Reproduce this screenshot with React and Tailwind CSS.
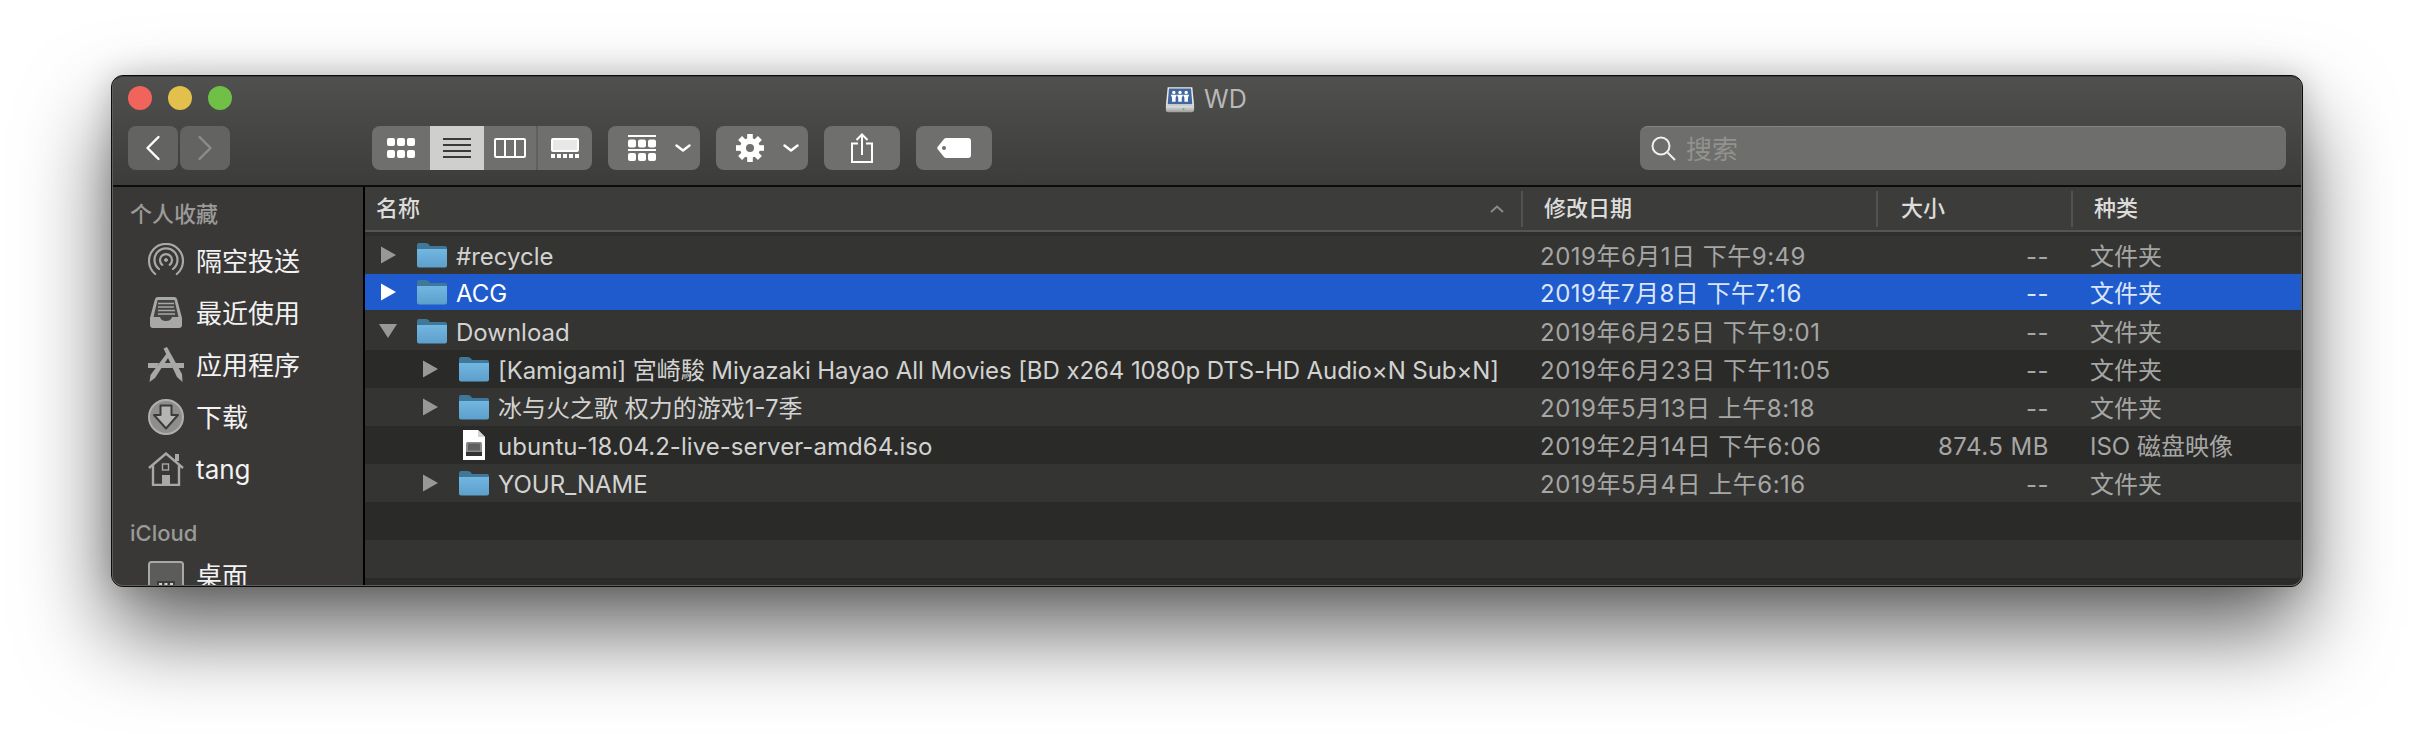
import React from "react";

const Chevron = ({ className = "" }) => (
  <svg width="16" height="8" viewBox="0 0 16 8" className={className}>
    <path d="M1.5 1.5 L8 6.5 L14.5 1.5" fill="none" stroke="#fff" strokeWidth="2.4" strokeLinecap="round" strokeLinejoin="round" />
  </svg>
);

const Folder = () => (
  <svg width="30" height="26" viewBox="0 0 30 26" className="shrink-0">
    <defs>
      <linearGradient id="fbody" x1="0" y1="0" x2="0" y2="1">
        <stop offset="0" stopColor="#72b6e2" />
        <stop offset="1" stopColor="#5d9fcb" />
      </linearGradient>
    </defs>
    <path d="M0 3 Q0 1 2 1 H9 Q11 1 12 2.5 L13 4 H28 Q30 4 30 6 V10 H0 Z" fill="#3f7898" />
    <path d="M0 7 H30 V23.5 Q30 25.5 28 25.5 H2 Q0 25.5 0 23.5 Z" fill="url(#fbody)" />
  </svg>
);

const FileIcon = () => (
  <svg width="30" height="30" viewBox="0 0 30 30" className="shrink-0">
    <path d="M4 0 H19 L26 7 V30 H4 Z" fill="#fff" />
    <path d="M19 0 L26 7 H19 Z" fill="#d4d4d4" />
    <rect x="7" y="12" width="16" height="14" rx="1.5" fill="#8a8a8a" />
    <rect x="9" y="13.5" width="12" height="7" rx="1" fill="#5f5f5f" />
    <rect x="7" y="22" width="16" height="4" fill="#333" />
  </svg>
);

const Tri = ({ open, color }) => (
  <svg width="22" height="18" viewBox="0 0 22 18" className="shrink-0">
    {open ? <polygon points="1,2 19,2 10,16" fill={color} /> : <polygon points="3,0.5 18,9 3,17.5" fill={color} />}
  </svg>
);

const Airdrop = () => (
  <svg width="36" height="36" viewBox="0 0 36 36" fill="none" stroke="#a8a8a6" strokeWidth="2.2" strokeLinecap="round">
    <path d="M7.2 31 A17 17 0 1 1 28.8 31" />
    <path d="M11 26 A11.5 11.5 0 1 1 25 26" />
    <path d="M14.3 21.8 A6 6 0 1 1 21.7 21.8" />
    <circle cx="18" cy="17" r="1.5" fill="#a8a8a6" strokeWidth="1" />
  </svg>
);
const Recents = () => (
  <svg width="36" height="32" viewBox="0 0 36 32">
    <path d="M7 2 Q7.5 0 10 0 H26 Q28.5 0 29 2 L34 21 V28 Q34 31 31 31 H5 Q2 31 2 28 V21 Z" fill="#a8a8a6" />
    <path d="M9.5 3 H26.5 L30.5 20 H24 Q23 24 18 24 Q13 24 12 20 H5.5 Z" fill="#454543" />
    <path d="M10 6.5 H26 M10 10 H26 M10 13.5 H27 M10 17 H27" stroke="#a8a8a6" strokeWidth="1.6" />
  </svg>
);
const Apps = () => (
  <svg width="36" height="36" viewBox="0 0 36 36" fill="#a8a8a6" stroke="none">
    <path d="M0 16 H11 L8.5 21 H0 Z M25 16 H36 V21 H27.5 Z M13 16 H23 L25 21 H11 Z" />
    <path d="M19 6 L22 8 L7 31 L1.5 35 L2.5 28 Z" />
    <path d="M15.5 1.5 L19 0 L34 27 L34.5 35 L29 30 Z" />
  </svg>
);
const Download = () => (
  <svg width="36" height="36" viewBox="0 0 36 36">
    <circle cx="18" cy="18" r="17" fill="#8e8e8c" stroke="#b0b0ae" strokeWidth="2" />
    <path d="M12.5 6.5 H23.5 V16 H30 L18 29.5 L6 16 H12.5 Z" fill="#b4b4b2" stroke="#3c3b3a" strokeWidth="2" strokeLinejoin="round" />
  </svg>
);
const Home = () => (
  <svg width="36" height="34" viewBox="0 0 36 34" fill="none" stroke="#a8a8a6" strokeWidth="2.4">
    <path d="M1 16 L18 1.5 L35 16" />
    <path d="M5 13.5 V33 H31 V13.5" />
    <rect x="27" y="2" width="4" height="7" fill="#a8a8a6" stroke="none" />
    <rect x="14.5" y="12" width="6" height="6" strokeWidth="1.4" />
    <rect x="14" y="23" width="8" height="10" fill="#a8a8a6" stroke="none" />
  </svg>
);
const Desktop = () => (
  <svg width="36" height="30" viewBox="0 0 36 30">
    <rect x="1" y="1" width="34" height="28" rx="2.5" fill="#5c5c5a" stroke="#a8a8a6" strokeWidth="2" />
    <rect x="9" y="20" width="18" height="10" fill="#3c3b3a" />
    <rect x="11" y="22" width="3" height="4" fill="#d0d0d0" />
    <rect x="16.5" y="22" width="3" height="4" fill="#d0d0d0" />
    <rect x="22" y="22" width="3" height="4" fill="#d0d0d0" />
  </svg>
);

const Gear = () => (
  <svg width="28" height="28" viewBox="0 0 28 28" fill="#fff">
    <circle cx="14" cy="14" r="10" />
    {[0, 45, 90, 135, 180, 225, 270, 315].map((a) => (
      <rect key={a} x="11.2" y="0" width="5.6" height="6" transform={`rotate(${a} 14 14)`} />
    ))}
    <circle cx="14" cy="14" r="4" fill="#6f6f6d" />
  </svg>
);

const Drive = () => (
  <svg width="30" height="29" viewBox="0 0 34 30">
    <defs>
      <linearGradient id="dsilver" x1="0" y1="0" x2="0" y2="1">
        <stop offset="0" stopColor="#e4e4e4" />
        <stop offset="1" stopColor="#9a9a9a" />
      </linearGradient>
    </defs>
    <path d="M3 1 H31 L33 22 H1 Z" fill="#eaeaea" />
    <path d="M4.5 2.5 H29.5 L31 20.5 H3 Z" fill="#41679e" />
    <path d="M1 22 H33 V27 Q33 29.5 30 29.5 H4 Q1 29.5 1 27 Z" fill="url(#dsilver)" />
    <circle cx="21" cy="26" r="1.2" fill="#5cb85c" />
    {[10, 17, 24].map((x) => (
      <g key={x} fill="#fff">
        <circle cx={x} cy="7" r="1.9" />
        <path d={`M${x - 3.5} 9.5 H${x + 3.5} L${x + 2} 13 V17.5 H${x - 2} V13 Z`} />
      </g>
    ))}
  </svg>
);

const navItem = "flex h-[52px] items-center pl-[35px] text-[26px] text-[#f2f2f2]";
const iconSlot = "flex w-[36px] h-[36px] mr-[12px] items-center justify-center shrink-0";
const btn = "flex h-[44px] items-center justify-center rounded-[8px] bg-[#6f6f6d]";
const menuBtn = "flex h-[44px] w-[92px] items-center ml-[16px] pl-[20px] gap-[19px] rounded-[8px] bg-[#6f6f6d]";

const rows = [
  { name: "#recycle", date: "2019年6月1日 下午9:49", size: "--", kind: "文件夹", level: 0, bg: "bg-[#343433]" },
  { name: "ACG", date: "2019年7月8日 下午7:16", size: "--", kind: "文件夹", level: 0, selected: true },
  { name: "Download", date: "2019年6月25日 下午9:01", size: "--", kind: "文件夹", level: 0, open: true, bg: "bg-[#343433]" },
  { name: "[Kamigami] 宮崎駿 Miyazaki Hayao All Movies [BD x264 1080p DTS-HD Audio×N Sub×N]", nameClass: "tracking-[-0.08px]", date: "2019年6月23日 下午11:05", size: "--", kind: "文件夹", level: 1, bg: "bg-[#2a2a29]" },
  { name: "冰与火之歌 权力的游戏1-7季", date: "2019年5月13日 上午8:18", size: "--", kind: "文件夹", level: 1, bg: "bg-[#343433]" },
  { name: "ubuntu-18.04.2-live-server-amd64.iso", nameClass: "tracking-[0.05px]", date: "2019年2月14日 下午6:06", size: "874.5 MB", kind: "ISO 磁盘映像", level: 1, file: true, bg: "bg-[#2a2a29]" },
  { name: "YOUR_NAME", date: "2019年5月4日 上午6:16", size: "--", kind: "文件夹", level: 1, bg: "bg-[#343433]" },
];

function Row({ r }) {
  const nameColor = r.selected ? "text-white" : "text-[#d2d2d0]";
  const metaColor = r.selected ? "text-[#dbe6fb]" : "text-[#a6a6a4]";
  return (
    <div className={`flex h-[38px] shrink-0 items-center text-[24px] ${r.selected ? "border-b-2 border-[#333332] bg-[#1f5bcc]" : r.bg}`}>
      <div className={`flex w-[1157px] items-center ${r.level === 1 ? "pl-[55px]" : "pl-[13px]"}`}>
        <div className="flex w-[39px] shrink-0 items-center">
          {!r.file && <Tri open={r.open} color={r.selected ? "#fff" : "#989896"} />}
        </div>
        {r.file ? <FileIcon /> : <Folder />}
        <span className={`ml-[9px] pt-[3px] whitespace-nowrap ${nameColor} ${r.nameClass || ""}`}>{r.name}</span>
      </div>
      <div className={`w-[355px] pl-[18px] pt-[3px] tracking-[0.5px] whitespace-nowrap ${metaColor}`}>{r.date}</div>
      <div className={`w-[194px] pr-[22px] pt-[3px] text-right tracking-[0.5px] whitespace-nowrap ${metaColor}`}>{r.size}</div>
      <div className={`flex-1 pl-[19px] pt-[3px] whitespace-nowrap ${metaColor}`}>{r.kind}</div>
    </div>
  );
}

const HeadDivider = () => <span className="h-[36px] w-[2px] shrink-0 bg-[#525250]" />;

export default function App() {
  return (
    <div className="min-h-[734px] bg-white pt-[75px] pl-[111px] font-[Inter,'Noto_Sans_CJK_SC',sans-serif]">
      <div className="h-[512px] w-[2192px] rounded-[12px] border border-[#0c0c0c] bg-[#3a3a38] shadow-[0_44px_88px_rgba(0,0,0,0.62),0_0_30px_rgba(0,0,0,0.18)]">
        <div className="flex h-full w-full flex-col overflow-hidden rounded-[11px] border border-[#5e5e5c] border-t-[#3a3a38]">
          {/* toolbar */}
          <div className="h-[108px] shrink-0 bg-linear-to-b from-[#50504e] to-[#3c3c3a] px-[15px]">
            <div className="flex h-[42px] items-center">
              <div className="flex gap-[16px]">
                <span className="h-[24px] w-[24px] rounded-full bg-[#f1645b]" />
                <span className="h-[24px] w-[24px] rounded-full bg-[#e3bf4b]" />
                <span className="h-[24px] w-[24px] rounded-full bg-[#70c047]" />
              </div>
              <div className="ml-[933px] flex items-center gap-[9px] pt-[2px]">
                <Drive />
                <span className="pt-[1px] text-[25px] leading-none text-[#b8b8b6]">WD</span>
              </div>
            </div>
            <div className="mt-[7px] flex h-[44px] items-center">
              <div className="flex gap-[2px]">
                <div className={`${btn} w-[50px] bg-[#636361]`}>
                  <svg width="18" height="26" viewBox="0 0 18 26"><path d="M14.5 2 L3.5 13 L14.5 24" fill="none" stroke="#fff" strokeWidth="2.4" strokeLinecap="round" strokeLinejoin="round" /></svg>
                </div>
                <div className={`${btn} w-[50px] bg-[#636361]`}>
                  <svg width="18" height="26" viewBox="0 0 18 26"><path d="M3.5 2 L14.5 13 L3.5 24" fill="none" stroke="#8c8c8a" strokeWidth="2.4" strokeLinecap="round" strokeLinejoin="round" /></svg>
                </div>
              </div>
              <div className="ml-[142px] flex h-[44px] w-[220px] overflow-hidden rounded-[8px] bg-[#6f6f6d]">
                <div className="flex w-[58px] items-center justify-center">
                  <svg width="28" height="20" viewBox="0 0 28 20" fill="#fff">
                    {[0, 10, 20].map((x) => [0, 12].map((y) => <rect key={`${x}-${y}`} x={x} y={y} width="8" height="8" rx="2" />))}
                  </svg>
                </div>
                <div className="flex w-[54px] items-center justify-center bg-[#cfcfcd]">
                  <svg width="28" height="20" viewBox="0 0 28 20" fill="#3a3a38">
                    <rect y="0" width="28" height="2" /><rect y="6" width="28" height="2" /><rect y="12" width="28" height="2" /><rect y="18" width="28" height="2" />
                  </svg>
                </div>
                <div className="flex w-[54px] items-center justify-center border-r-2 border-[#5f5f5d]">
                  <svg width="32" height="20" viewBox="0 0 32 20" fill="none" stroke="#fff" strokeWidth="2">
                    <rect x="1" y="1" width="30" height="18" rx="1" /><path d="M11 1 V19 M21 1 V19" />
                  </svg>
                </div>
                <div className="flex flex-1 items-center justify-center">
                  <svg width="28" height="20" viewBox="0 0 28 20" fill="#fff">
                    <rect x="1" y="1" width="26" height="12" rx="1" fill="#e8e8e8" stroke="#fff" strokeWidth="2" />
                    {[0, 6, 12, 18, 24].map((x) => <rect key={x} x={x} y="16" width="4" height="4" />)}
                  </svg>
                </div>
              </div>
              <div className={menuBtn}>
                <svg width="28" height="26" viewBox="0 0 28 26" fill="#fff">
                  <rect width="28" height="2" y="0" />
                  {[0, 10, 20].map((x) => <rect key={x} x={x} y="4.5" width="8" height="8" rx="2" />)}
                  <rect width="28" height="2" y="14" />
                  {[0, 10, 20].map((x) => <rect key={x} x={x} y="18" width="8" height="8" rx="2" />)}
                </svg>
                <Chevron />
              </div>
              <div className={menuBtn}>
                <Gear />
                <Chevron />
              </div>
              <div className={`${btn} ml-[16px] w-[76px]`}>
                <svg width="22" height="30" viewBox="0 0 22 30" fill="none" stroke="#fff" strokeWidth="2">
                  <path d="M7 10.5 H1 V29 H21 V10.5 H15" /><path d="M11 22 V2 M5.5 7 L11 1.5 L16.5 7" />
                </svg>
              </div>
              <div className={`${btn} ml-[16px] w-[76px]`}>
                <svg width="34" height="20" viewBox="0 0 34 20">
                  <path d="M9 0 H31 Q34 0 34 3 V17 Q34 20 31 20 H9 Q8 20 7 19 L0.5 11 Q0 10 0.5 9 L7 1 Q8 0 9 0 Z" fill="#fff" />
                  <circle cx="7" cy="10" r="2" fill="#6f6f6d" />
                </svg>
              </div>
              <div className="ml-auto flex h-[44px] w-[646px] items-center rounded-[8px] border-t border-[#858583] bg-[#6e6e6c] pl-[11px]">
                <svg width="25" height="25" viewBox="0 0 25 25" fill="none" stroke="#f0f0f0" strokeWidth="2">
                  <circle cx="10" cy="10" r="8.5" /><path d="M16.5 16.5 L24 24" />
                </svg>
                <span className="ml-[10px] pt-[2px] text-[26px] leading-none text-[#92928f]">搜索</span>
              </div>
            </div>
          </div>
          {/* body */}
          <div className="flex min-h-0 flex-1 border-t-2 border-[#0c0c0c]">
            <aside className="w-[252px] shrink-0 overflow-hidden border-r-2 border-black bg-[#393837] pt-[13px]">
              <div className="flex h-[28px] items-center pl-[17px] text-[22px] font-medium text-[#9a9a98]">个人收藏</div>
              <div className="mt-[7px]">
                <div className={navItem}><span className={iconSlot}><Airdrop /></span>隔空投送</div>
                <div className={navItem}><span className={iconSlot}><Recents /></span>最近使用</div>
                <div className={navItem}><span className={iconSlot}><Apps /></span>应用程序</div>
                <div className={navItem}><span className={iconSlot}><Download /></span>下载</div>
                <div className={navItem}><span className={iconSlot}><Home /></span>tang</div>
              </div>
              <div className="mt-[24px] flex h-[28px] items-center pl-[17px] text-[22px] font-medium text-[#9a9a98]">iCloud</div>
              <div className={`${navItem} mt-[3px]`}><span className={iconSlot}><Desktop /></span>桌面</div>
            </aside>
            <main className="flex min-w-0 flex-1 flex-col">
              <div className="flex h-[45px] shrink-0 items-center border-b-2 border-[#555553] bg-[#3c3c3a] text-[22px] font-medium text-[#dcdcda]">
                <div className="flex w-[1156px] items-center pl-[11px]">
                  <span>名称</span>
                  <svg width="14" height="8" viewBox="0 0 14 8" className="ml-auto mr-[17px]">
                    <path d="M1 7 L7 1.5 L13 7" fill="none" stroke="#8a8a88" strokeWidth="2" />
                  </svg>
                </div>
                <HeadDivider />
                <div className="w-[353px] pl-[21px]">修改日期</div>
                <HeadDivider />
                <div className="w-[193px] pl-[23px]">大小</div>
                <HeadDivider />
                <div className="flex-1 pl-[21px]">种类</div>
              </div>
              <div className="h-[4px] shrink-0 bg-[#2e2e2d]" />
              <div className="flex min-h-0 flex-1 flex-col overflow-hidden bg-[#2a2a29]">
                {rows.map((r) => <Row key={r.name} r={r} />)}
                <div className="h-[38px] shrink-0 bg-[#2a2a29]" />
                <div className="h-[38px] shrink-0 bg-[#343433]" />
              </div>
            </main>
          </div>
        </div>
      </div>
    </div>
  );
}
